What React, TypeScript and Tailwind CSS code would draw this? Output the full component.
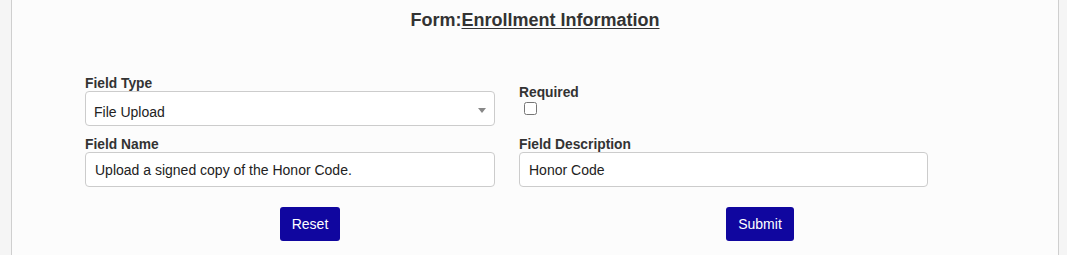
import { useState } from 'react'

export default function App() {
  const [fieldType, setFieldType] = useState('File Upload')
  const [required, setRequired] = useState(false)
  const [fieldName, setFieldName] = useState('Upload a signed copy of the Honor Code.')
  const [fieldDescription, setFieldDescription] = useState('Honor Code')

  const labelClasses = 'block text-[13.8px] leading-[15px] font-bold text-[#333]'
  const inputClasses =
    'block w-full h-[35px] px-[9px] bg-white border border-[#ccc] rounded-[4px] text-[14px] text-[#222] outline-none'

  return (
    <div className="min-h-[255px] bg-[#f5f5f5] pl-[11px] pr-[8px] font-['Liberation_Sans',Arial,sans-serif]">
      <div className="h-[255px] bg-[#fcfcfc] border-x border-[#cfcfcf]">
        {/* Title */}
        <h2 className="pt-[10px] text-center text-[18px] leading-[20px] font-bold text-[#333]">
          Form:<span className="underline underline-offset-2">Enrollment Information</span>
        </h2>

        {/* Form */}
        <form className="mt-[46px] ml-[73px]" onSubmit={(e) => e.preventDefault()}>
          <div className="grid grid-cols-[410px_409px] gap-x-[24px]">
            <div>
              <label className={labelClasses}>Field Type</label>
              <div className="relative">
                <select
                  value={fieldType}
                  onChange={(e) => setFieldType(e.target.value)}
                  className={`${inputClasses} appearance-none pt-[8px] pb-0 pl-[8px]`}
                >
                  <option>File Upload</option>
                  <option>Text</option>
                  <option>Checkbox</option>
                </select>
                <span className="pointer-events-none absolute right-[9px] top-[17px] w-0 h-0 border-x-[4px] border-x-transparent border-t-[5px] border-t-[#888]" />
              </div>
            </div>
            <div className="pt-[9px]">
              <label className={labelClasses}>Required</label>
              <input
                type="checkbox"
                checked={required}
                onChange={(e) => setRequired(e.target.checked)}
                className="block mt-[2px] ml-[5px] w-[13px] h-[13px]"
              />
            </div>

            <div className="mt-[11px]">
              <label className={labelClasses}>Field Name</label>
              <input
                type="text"
                value={fieldName}
                onChange={(e) => setFieldName(e.target.value)}
                className={inputClasses}
              />
            </div>
            <div className="mt-[11px]">
              <label className={labelClasses}>Field Description</label>
              <input
                type="text"
                value={fieldDescription}
                onChange={(e) => setFieldDescription(e.target.value)}
                className={inputClasses}
              />
            </div>
          </div>

          {/* Buttons */}
          <div className="mt-[20px] grid grid-cols-[450px_450px]">
            <div className="flex justify-center">
              <button
                type="reset"
                className="h-[34px] px-[12px] rounded-[3px] bg-[#10069f] text-white text-[14px]"
              >
                Reset
              </button>
            </div>
            <div className="flex justify-center">
              <button
                type="submit"
                className="h-[34px] px-[12px] rounded-[3px] bg-[#10069f] text-white text-[14px]"
              >
                Submit
              </button>
            </div>
          </div>
        </form>
      </div>
    </div>
  )
}
